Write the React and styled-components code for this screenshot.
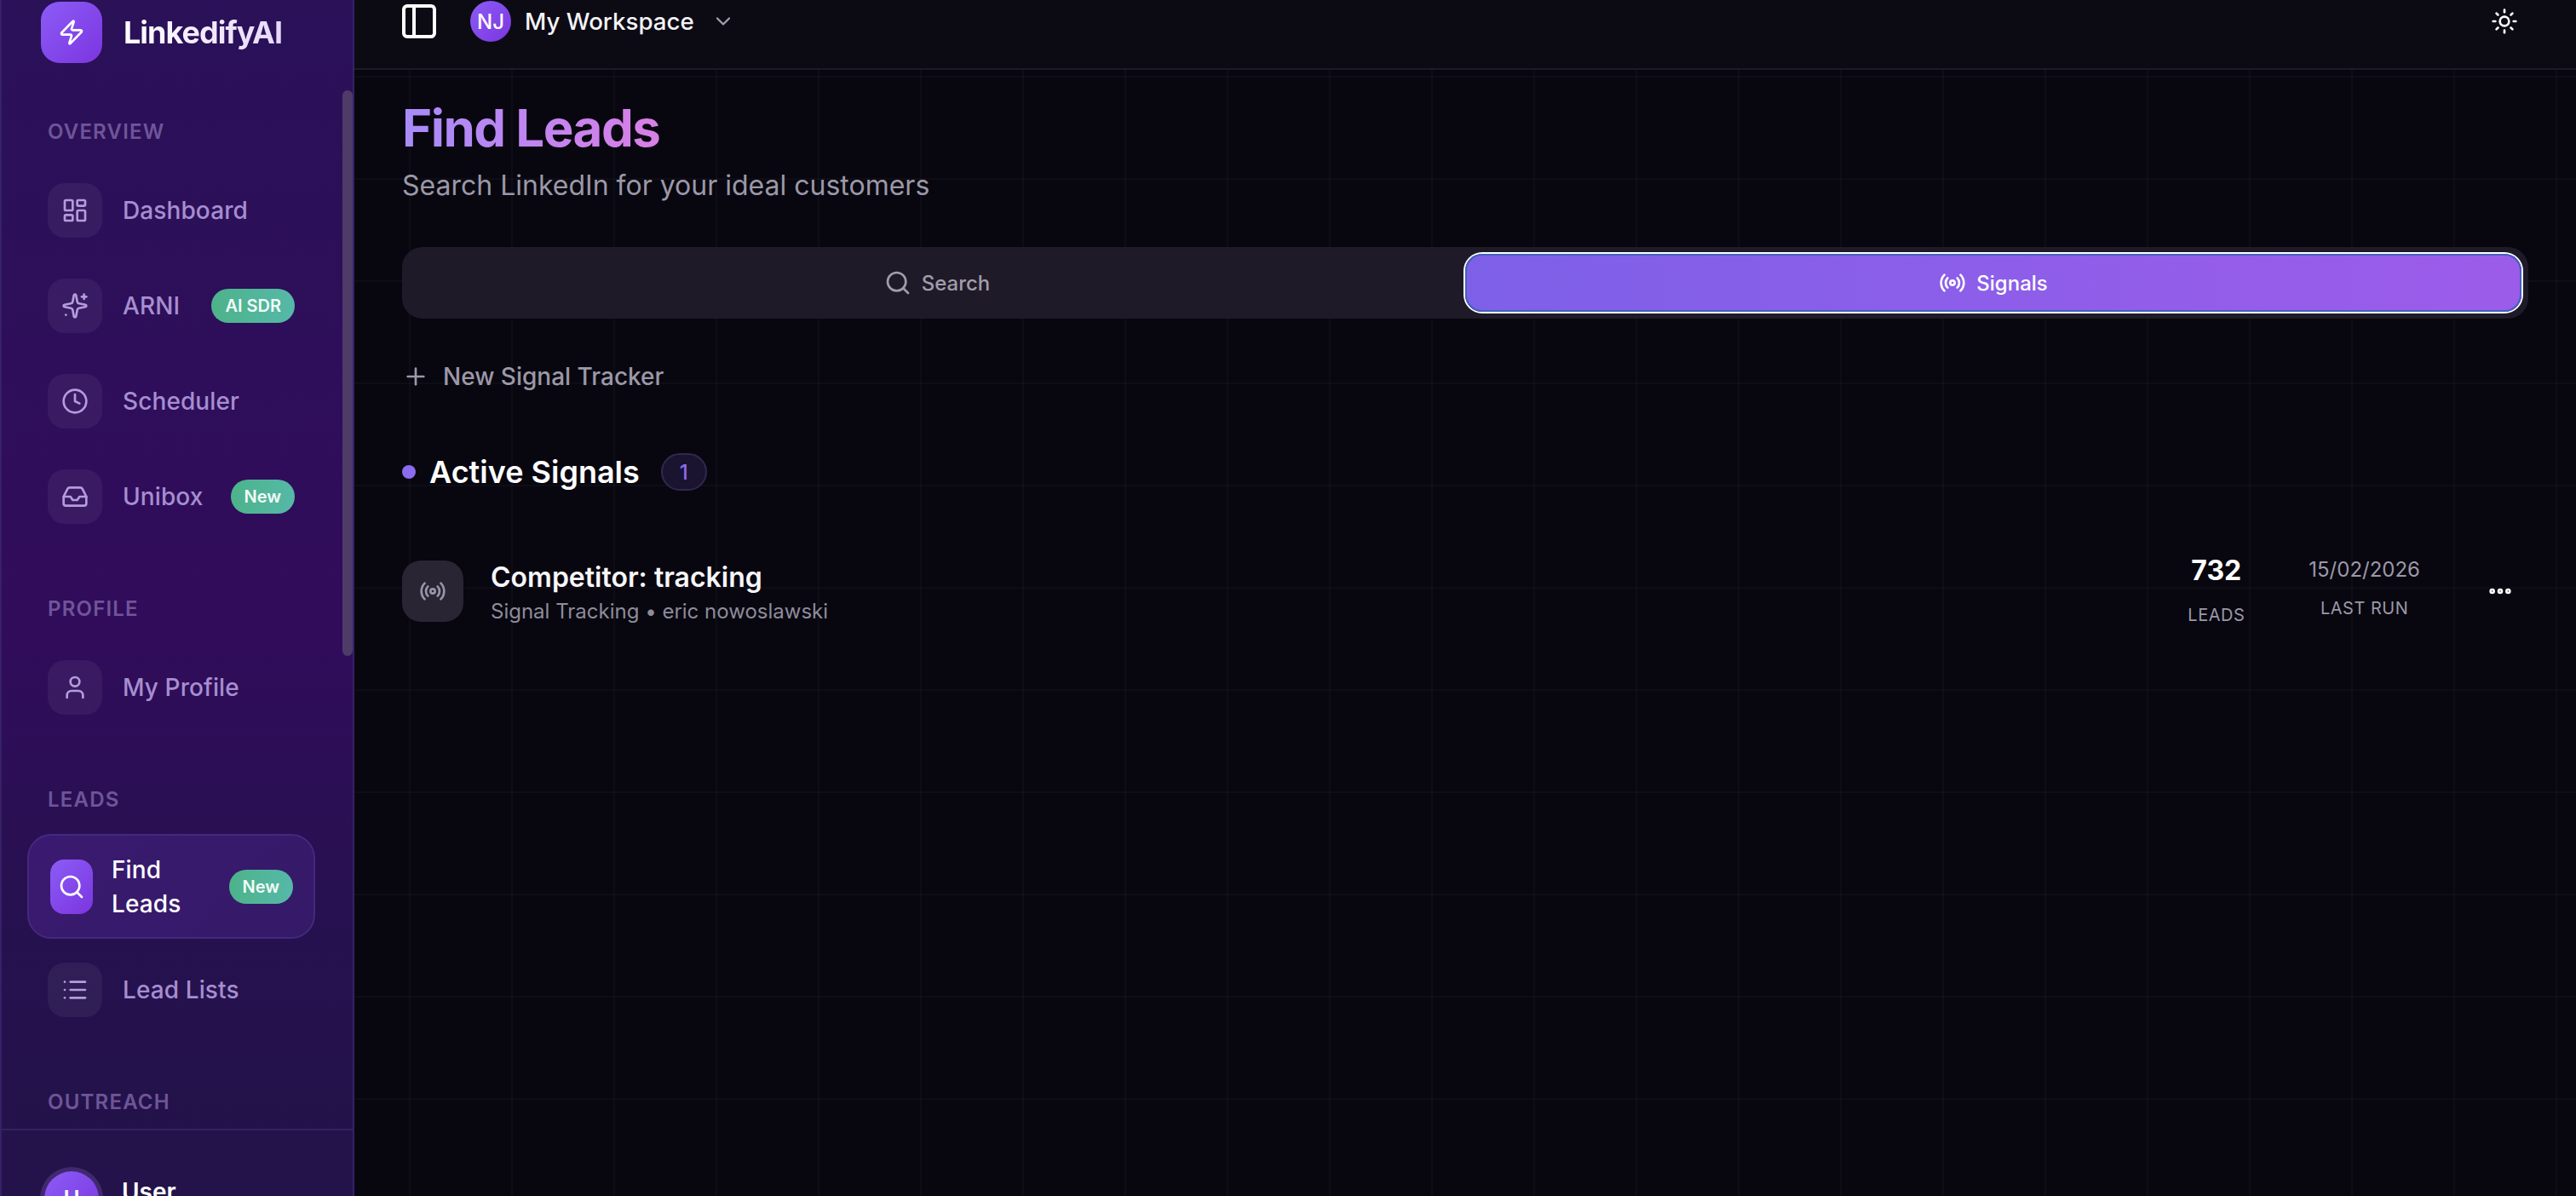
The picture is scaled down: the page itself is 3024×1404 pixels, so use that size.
import React from 'react'
import styled, { createGlobalStyle } from 'styled-components'
import {
  ChevronDown,
  Clock,
  Ellipsis,
  Inbox,
  LayoutDashboard,
  List,
  PanelLeft,
  Plus,
  Radio,
  Search,
  Sun,
  User,
  Zap,
} from 'lucide-react'

const GlobalStyle = createGlobalStyle`
  html, body {
    margin: 0;
    height: 100%;
    background: #08070f;
    font-family: Inter, "Liberation Sans", sans-serif;
    overflow: hidden;
  }
  * {
    box-sizing: border-box;
  }
`

const Layout = styled.div`
  display: flex;
  width: 3024px;
  height: 1404px;
  overflow: hidden;
`

const Sidebar = styled.aside`
  position: relative;
  display: flex;
  flex-direction: column;
  flex-shrink: 0;
  width: 416px;
  height: 1404px;
  overflow: hidden;
  background: linear-gradient(180deg, #2a1158 0%, #2e0e5a 30%, #310c5b 52%, #26114f 78%, #221348 100%);
  border-right: 2px solid #37206a;
  border-left: 2px solid #37206a;
`

const Brand = styled.div`
  display: flex;
  align-items: center;
  flex-shrink: 0;
  gap: 25px;
  padding: 2px 0 0 46px;
`

const LogoTile = styled.div`
  display: flex;
  align-items: center;
  justify-content: center;
  width: 72px;
  height: 72px;
  border-radius: 22px;
  color: white;
  background: linear-gradient(135deg, #8b5cf6, #7c35e0);
`

const BrandName = styled.div`
  font-size: 36px;
  font-weight: 700;
  letter-spacing: -1px;
  background: linear-gradient(90deg, #ffffff, #e6d8fb);
  -webkit-background-clip: text;
  background-clip: text;
  color: transparent;
`

const Nav = styled.nav`
  flex: 1;
  min-height: 0;
  overflow: hidden;
  padding-top: 65px;
`

const SectionLabel = styled.div`
  height: 32px;
  margin: 0 0 24px 54px;
  font-size: 24px;
  line-height: 32px;
  font-weight: 600;
  letter-spacing: 1.2px;
  color: #6f5598;
`

const Section = styled.section`
  margin-bottom: 64px;
`

const Item = styled.div`
  display: flex;
  align-items: center;
  gap: 24px;
  height: 104px;
  margin-bottom: 8px;
  padding: 0 68px 0 54px;
  font-size: 28px;
  font-weight: 500;
  color: #a68ed0;
`

const ItemLabel = styled.span`
  flex: 1;
  letter-spacing: 0.1px;
`

const IconTile = styled.div`
  display: flex;
  align-items: center;
  justify-content: center;
  flex-shrink: 0;
  width: 64px;
  height: 64px;
  border-radius: 20px;
  color: #b39ddb;
  background: rgba(255, 255, 255, 0.055);
`

const ActiveItem = styled.div`
  display: flex;
  align-items: center;
  gap: 22px;
  width: 338px;
  height: 123px;
  margin: 0 0 8px 30px;
  padding: 0 24px 0 25px;
  font-size: 28px;
  line-height: 40px;
  font-weight: 500;
  color: white;
  background: linear-gradient(135deg, #3a1a70, #351a68);
  border: 2px solid #45287f;
  border-radius: 28px;
`

const ActiveTile = styled.div`
  display: flex;
  align-items: center;
  justify-content: center;
  flex-shrink: 0;
  width: 50px;
  height: 64px;
  border-radius: 16px;
  color: white;
  background: linear-gradient(135deg, #8b5cf6, #7c35e0);
`

const Badge = styled.span`
  display: flex;
  align-items: center;
  justify-content: center;
  flex-shrink: 0;
  height: 40px;
  padding: 0 16px;
  border-radius: 20px;
  font-size: 20px;
  font-weight: 600;
  color: #f2fbf7;
  background: linear-gradient(90deg, #4db38a, #56b8a8);
`

const Thumb = styled.div`
  position: absolute;
  top: 106px;
  right: 0;
  width: 12px;
  height: 664px;
  border-radius: 6px;
  background: #4f3b68;
`

const SidebarFooter = styled.div`
  display: flex;
  flex-shrink: 0;
  gap: 27px;
  height: 79px;
  padding: 48px 0 0 50px;
  border-top: 2px solid #33215f;
  background: #23134a;
`

const Avatar = styled.div`
  flex-shrink: 0;
  display: flex;
  justify-content: center;
  padding-top: 16px;
  width: 64px;
  height: 64px;
  border-radius: 50%;
  font-size: 26px;
  font-weight: 600;
  color: white;
  background: linear-gradient(135deg, #8b5cf6, #7c35e0);
  box-shadow: 0 0 0 5px #41296f;
`

const UserName = styled.div`
  margin-top: 4px;
  font-size: 28px;
  font-weight: 600;
  line-height: 40px;
  color: white;
`

const Main = styled.main`
  flex: 1;
  display: flex;
  flex-direction: column;
  min-width: 0;
`

const Header = styled.header`
  display: flex;
  align-items: flex-start;
  flex-shrink: 0;
  height: 82px;
  padding: 1px 68px 0 52px;
  background: #0c0b14;
  border-bottom: 2px solid #1c1a27;
`

const HeaderButton = styled.div`
  display: flex;
  align-items: center;
  height: 48px;
  color: white;
`

const WorkspaceAvatar = styled.div`
  display: flex;
  align-items: center;
  justify-content: center;
  width: 48px;
  height: 48px;
  margin-left: 36px;
  border-radius: 50%;
  font-size: 24px;
  font-weight: 500;
  color: white;
  background: linear-gradient(135deg, #8b5cf6, #7c35e0);
`

const WorkspaceName = styled.span`
  margin: 0 20px 0 16px;
  font-size: 27.7px;
  font-weight: 500;
  color: #f4f3f7;
`

const Spacer = styled.div`
  flex: 1;
`

const Content = styled.div`
  flex: 1;
  padding: 34px 56px 0 56px;
  background-color: #08070f;
  background-image:
    linear-gradient(rgba(255, 255, 255, 0.024) 2px, transparent 2px),
    linear-gradient(90deg, rgba(255, 255, 255, 0.024) 2px, transparent 2px);
  background-size: 120px 120px;
  background-position: 64px 7px;
`

const Title = styled.h1`
  margin: 0;
  width: fit-content;
  font-size: 60px;
  line-height: 68px;
  font-weight: 700;
  letter-spacing: -1.5px;
  background: linear-gradient(90deg, #a78bfa, #d97fe6);
  -webkit-background-clip: text;
  background-clip: text;
  color: transparent;
`

const Subtitle = styled.p`
  margin: 14px 0 0;
  font-size: 32px;
  line-height: 40px;
  color: #9c98a8;
`

const Tabs = styled.div`
  display: grid;
  grid-template-columns: 1fr 1fr;
  height: 84px;
  margin-top: 52px;
  padding: 8px;
  border-radius: 24px;
  background: #1f1a28;
`

const Tab = styled.div`
  display: flex;
  align-items: center;
  justify-content: center;
  gap: 12px;
  border-radius: 20px;
  font-size: 24px;
  font-weight: 500;
  color: ${props => (props.$active ? 'white' : '#a19dab')};
  background: ${props =>
    props.$active ? 'linear-gradient(90deg, #7e60e8, #9c5cea)' : 'transparent'};
  box-shadow: ${props =>
    props.$active ? '0 0 0 2px white, inset 0 0 0 2px #4361bd' : 'none'};
`

const NewTracker = styled.div`
  display: flex;
  align-items: center;
  gap: 16px;
  height: 56px;
  margin-top: 40px;
  font-size: 28px;
  font-weight: 500;
  color: #9c98a8;
`

const SectionTitle = styled.div`
  display: flex;
  align-items: center;
  margin-top: 62px;
  height: 44px;
`

const Dot = styled.span`
  width: 16px;
  height: 16px;
  margin-right: 16px;
  border-radius: 50%;
  background: #8b6cf0;
`

const SectionHeading = styled.h2`
  margin: 0 25px 0 0;
  font-size: 36px;
  font-weight: 600;
  color: white;
`

const CountPill = styled.span`
  display: flex;
  align-items: center;
  justify-content: center;
  width: 54px;
  height: 44px;
  border-radius: 22px;
  font-size: 24px;
  font-weight: 500;
  color: #8b6cf0;
  background: #1a1430;
  border: 2px solid #32284f;
`

const SignalRow = styled.div`
  display: flex;
  align-items: center;
  margin-top: 82px;
  height: 72px;
`

const SignalIcon = styled.div`
  display: flex;
  align-items: center;
  justify-content: center;
  flex-shrink: 0;
  width: 72px;
  height: 72px;
  border-radius: 22px;
  color: #9a94a8;
  background: #2a2533;
`

const SignalText = styled.div`
  flex: 1;
  margin-left: 32px;
  padding-top: 4px;
`

const SignalName = styled.div`
  font-size: 32px;
  line-height: 40px;
  font-weight: 600;
  color: #f7f6f9;
`

const SignalMeta = styled.div`
  margin-top: 4px;
  font-size: 24px;
  line-height: 32px;
  color: #8f8b9b;
`

const Stat = styled.div`
  display: flex;
  flex-direction: column;
  align-items: center;
  align-self: flex-start;
  margin: ${props => props.$top}px ${props => props.$gap}px 0 0;
`

const StatValue = styled.div`
  font-size: ${props => (props.$big ? 32 : 24)}px;
  font-weight: ${props => (props.$big ? 700 : 400)};
  line-height: 40px;
  color: ${props => (props.$big ? 'white' : '#9c98a8')};
`

const StatLabel = styled.div`
  margin-top: ${props => props.$offset}px;
  font-size: 20px;
  line-height: 28px;
  letter-spacing: 0.5px;
  color: #9c98a8;
`

const RowMenu = styled.div`
  display: flex;
  color: white;
  margin-right: 17px;
`

// lucide's Sparkles, but the reference has a small solid dot instead of the ring
function SparkleIcon({ size, strokeWidth }) {
  return (
    <svg
      width={size}
      height={size}
      viewBox="0 0 24 24"
      fill="none"
      stroke="currentColor"
      strokeWidth={strokeWidth}
      strokeLinecap="round"
      strokeLinejoin="round"
    >
      <path d="M11.017 2.814a1 1 0 0 1 1.966 0l1.051 5.558a2 2 0 0 0 1.594 1.594l5.558 1.051a1 1 0 0 1 0 1.966l-5.558 1.051a2 2 0 0 0-1.594 1.594l-1.051 5.558a1 1 0 0 1-1.966 0l-1.051-5.558a2 2 0 0 0-1.594-1.594l-5.558-1.051a1 1 0 0 1 0-1.966l5.558-1.051a2 2 0 0 0 1.594-1.594z" />
      <path d="M20 2v4" />
      <path d="M22 4h-4" />
      <circle cx="4" cy="20" r="1" fill="currentColor" stroke="none" />
    </svg>
  )
}

function NavItem({ icon: Icon, label, badge }) {
  return (
    <Item>
      <IconTile>
        <Icon size={32} strokeWidth={2} />
      </IconTile>
      <ItemLabel>{label}</ItemLabel>
      {badge && <Badge>{badge}</Badge>}
    </Item>
  )
}

export default function App() {
  return (
    <Layout>
      <GlobalStyle />
      <Sidebar>
        <Brand>
          <LogoTile>
            <Zap size={32} strokeWidth={2} />
          </LogoTile>
          <BrandName>LinkedifyAI</BrandName>
        </Brand>
        <Nav>
          <Section>
            <SectionLabel>OVERVIEW</SectionLabel>
            <NavItem icon={LayoutDashboard} label="Dashboard" />
            <NavItem icon={SparkleIcon} label="ARNI" badge="AI SDR" />
            <NavItem icon={Clock} label="Scheduler" />
            <NavItem icon={Inbox} label="Unibox" badge="New" />
          </Section>
          <Section>
            <SectionLabel>PROFILE</SectionLabel>
            <NavItem icon={User} label="My Profile" />
          </Section>
          <Section>
            <SectionLabel>LEADS</SectionLabel>
            <ActiveItem>
              <ActiveTile>
                <Search size={32} strokeWidth={2} />
              </ActiveTile>
              <ItemLabel>Find Leads</ItemLabel>
              <Badge>New</Badge>
            </ActiveItem>
            <NavItem icon={List} label="Lead Lists" />
          </Section>
          <Section>
            <SectionLabel>OUTREACH</SectionLabel>
          </Section>
        </Nav>
        <SidebarFooter>
          <Avatar>U</Avatar>
          <UserName>User</UserName>
        </SidebarFooter>
        <Thumb />
      </Sidebar>
      <Main>
        <Header>
          <HeaderButton>
            <PanelLeft size={48} strokeWidth={2} />
          </HeaderButton>
          <WorkspaceAvatar>NJ</WorkspaceAvatar>
          <HeaderButton>
            <WorkspaceName>My Workspace</WorkspaceName>
            <ChevronDown size={28} color="#a19dab" />
          </HeaderButton>
          <Spacer />
          <HeaderButton>
            <Sun size={32} strokeWidth={2} />
          </HeaderButton>
        </Header>
        <Content>
          <Title>Find Leads</Title>
          <Subtitle>Search LinkedIn for your ideal customers</Subtitle>
          <Tabs>
            <Tab>
              <Search size={32} strokeWidth={2} />
              Search
            </Tab>
            <Tab $active>
              <Radio size={32} strokeWidth={2} />
              Signals
            </Tab>
          </Tabs>
          <NewTracker>
            <Plus size={32} strokeWidth={2} />
            New Signal Tracker
          </NewTracker>
          <SectionTitle>
            <Dot />
            <SectionHeading>Active Signals</SectionHeading>
            <CountPill>1</CountPill>
          </SectionTitle>
          <SignalRow>
            <SignalIcon>
              <Radio size={32} strokeWidth={2} />
            </SignalIcon>
            <SignalText>
              <SignalName>Competitor: tracking</SignalName>
              <SignalMeta>Signal Tracking • eric nowoslawski</SignalMeta>
            </SignalText>
            <Stat $top={-8} $gap={75}>
              <StatValue $big>732</StatValue>
              <StatLabel $offset={18}>LEADS</StatLabel>
            </Stat>
            <Stat $top={-9} $gap={78}>
              <StatValue>15/02/2026</StatValue>
              <StatLabel $offset={11}>LAST RUN</StatLabel>
            </Stat>
            <RowMenu>
              <Ellipsis size={32} strokeWidth={3} />
            </RowMenu>
          </SignalRow>
        </Content>
      </Main>
    </Layout>
  )
}
